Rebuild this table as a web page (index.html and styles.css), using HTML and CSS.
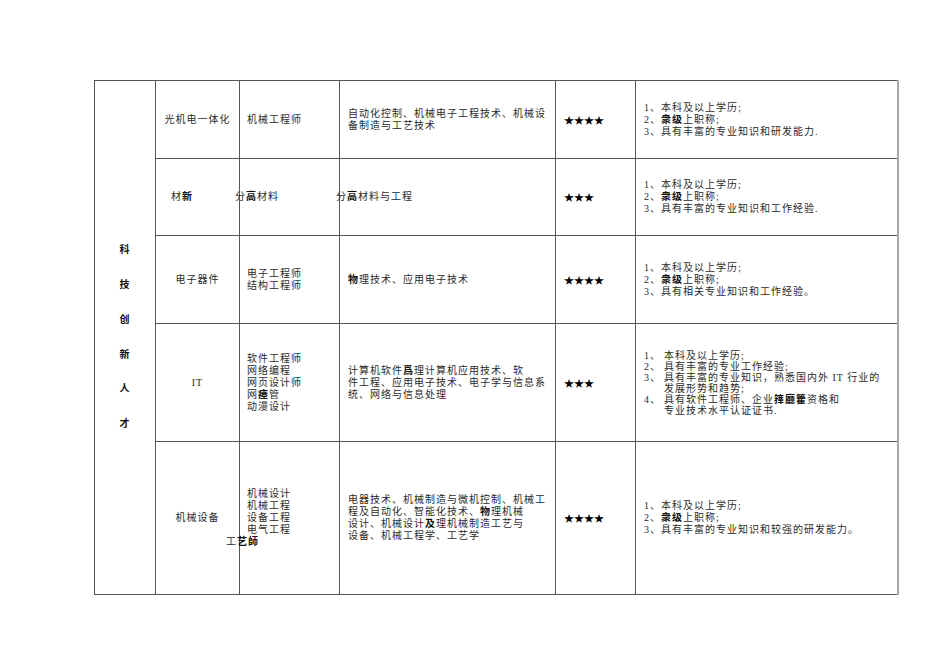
FILE: index.html
```html
<!DOCTYPE html>
<html lang="zh-CN">
<head>
<meta charset="utf-8">
<title>科技创新人才</title>
<link rel="stylesheet" href="styles.css">
</head>
<body>
<div class="page">
<table class="grid">
  <colgroup>
    <col class="c1"><col class="c2"><col class="c3"><col class="c4"><col class="c5"><col class="c6">
  </colgroup>
  <tbody>
    <tr class="r1">
      <td class="cat" rowspan="5">
        <div class="vert"><span>科</span><span>技</span><span>创</span><span>新</span><span>人</span><span>才</span></div>
      </td>
      <td class="field">光机电一体化</td>
      <td class="jobs"><div>机械工程师</div></td>
      <td class="major"><div>自动化控制、机械电子工程技术、机械设</div><div>备制造与工艺技术</div></td>
      <td class="stars">★★★★</td>
      <td class="req">
        <div>1、本科及以上学历;</div>
        <div>2、<b>衆级</b>上职称;</div>
        <div>3、具有丰富的专业知识和研发能力.</div>
      </td>
    </tr>
    <tr class="r2">
      <td class="field left">材<b>新</b></td>
      <td class="jobs"><div class="shift">分<b>高</b>材料</div></td>
      <td class="major"><div class="shift">分<b>高</b>材料与工程</div></td>
      <td class="stars">★★★</td>
      <td class="req">
        <div>1、本科及以上学历;</div>
        <div>2、<b>衆级</b>上职称;</div>
        <div>3、具有丰富的专业知识和工作经验.</div>
      </td>
    </tr>
    <tr class="r3">
      <td class="field">电子器件</td>
      <td class="jobs"><div>电子工程师</div><div>结构工程师</div></td>
      <td class="major"><div><b>物</b>理技术、应用电子技术</div></td>
      <td class="stars">★★★★</td>
      <td class="req">
        <div>1、本科及以上学历;</div>
        <div>2、<b>衆级</b>上职称;</div>
        <div>3、具有相关专业知识和工作经验。</div>
      </td>
    </tr>
    <tr class="r4">
      <td class="field">IT</td>
      <td class="jobs"><div>软件工程师</div><div>网络编程</div><div>网页设计师</div><div>网<b>瘗</b>管</div><div>动漫设计</div></td>
      <td class="major"><div>计算机软件<b>爲</b>理计算机应用技术、软</div><div>件工程、应用电子技术、电子学与信息系</div><div>统、网络与信息处理</div></td>
      <td class="stars">★★★</td>
      <td class="req lh11">
        <div class="item"><span class="num">1、</span><span>本科及以上学历;</span></div>
        <div class="item"><span class="num">2、</span><span>具有丰富的专业工作经验;</span></div>
        <div class="item"><span class="num">3、</span><span>具有丰富的专业知识，熟悉国内外 IT 行业的<br>发展形势和趋势;</span></div>
        <div class="item"><span class="num">4、</span><span>具有软件工程师、企业<b>箨廳籗</b>资格和<br>专业技术水平认证证书.</span></div>
      </td>
    </tr>
    <tr class="r5">
      <td class="field">机械设备</td>
      <td class="jobs"><div>机械设计</div><div>机械工程</div><div>设备工程</div><div>电气工程</div><div class="shift2">工<b>艺師</b></div></td>
      <td class="major"><div>电器技术、机械制造与微机控制、机械工</div><div>程及自动化、智能化技术、<b>物</b>理机械</div><div>设计、机械设计<b>及</b>理机械制造工艺与</div><div>设备、机械工程学、工艺学</div></td>
      <td class="stars">★★★★</td>
      <td class="req">
        <div>1、本科及以上学历;</div>
        <div>2、<b>衆级</b>上职称;</div>
        <div>3、具有丰富的专业知识和较强的研发能力。</div>
      </td>
    </tr>
  </tbody>
</table>
</div>
</body>
</html>
```

FILE: styles.css
```css
html, body {
  margin: 0;
  padding: 0;
  background: #ffffff;
}

.page {
  padding: 80px 0 0 94px;
  font-family: "Liberation Serif", "Noto Sans CJK SC", serif;
  font-size: 10px;
  letter-spacing: 1px;
  color: #2a2a2a;
}

.grid {
  border-collapse: collapse;
  table-layout: fixed;
  width: 804px;
}

.grid td {
  border: 1px solid #555555;
  padding: 0;
  vertical-align: middle;
  line-height: 12px;
  white-space: nowrap;
  overflow: visible;
}

.grid td.req {
  border-right: 2px solid #a8a8a8;
}

.c1 { width: 61px; }
.c2 { width: 84px; }
.c3 { width: 100px; }
.c4 { width: 216px; }
.c5 { width: 80px; }
.c6 { width: 262px; }

.r1 { height: 78px; }
.r2 { height: 77px; }
.r3 { height: 88px; }
.r4 { height: 118px; }
.r5 { height: 153px; }

.grid b {
  font-weight: 700;
  color: #111111;
}

.cat {
  text-align: center;
}

.vert {
  display: flex;
  flex-direction: column;
  align-items: center;
  font-weight: 700;
  font-size: 10px;
  line-height: 34.7px;
  color: #111111;
}

.field {
  text-align: center;
}

.field.left {
  text-align: left;
  padding-left: 15px;
}

.jobs {
  padding-left: 7px !important;
}

.major {
  padding-left: 8px !important;
}

.stars {
  padding-left: 8px !important;
  font-family: "Noto Sans CJK SC", sans-serif;
  letter-spacing: 0;
  color: #000000;
}

.req {
  padding-left: 8px !important;
}

.shift {
  margin-left: -12px;
}

.shift2 {
  margin-left: -21px;
}

.grid td.lh11 { line-height: 11px; }

.item {
  display: flex;
}

.item .num {
  width: 20px;
  flex: 0 0 20px;
}
```
